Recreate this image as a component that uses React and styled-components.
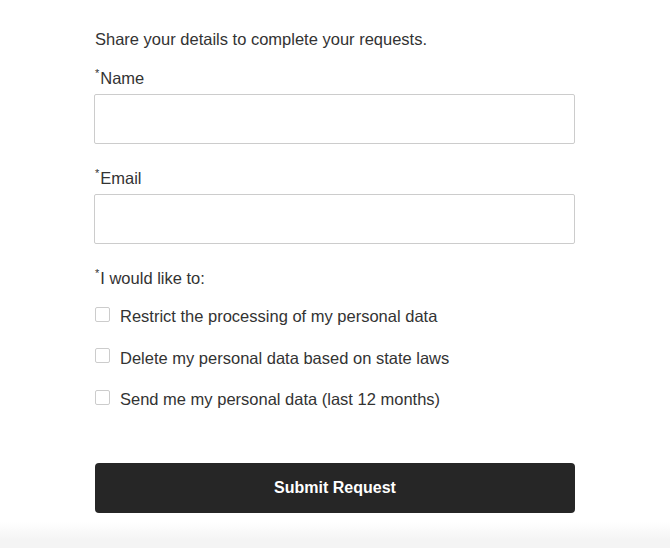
import styled, { createGlobalStyle } from "styled-components";

const GlobalStyle = createGlobalStyle`
  html, body {
    margin: 0;
    padding: 0;
    background: #ffffff;
  }
  body {
    font-family: "Liberation Sans", Arial, sans-serif;
    color: #333333;
  }
`;

const options = [
  "Restrict the processing of my personal data",
  "Delete my personal data based on state laws",
  "Send me my personal data (last 12 months)",
];

const App = () => {
  return (
    <>
      <GlobalStyle />
      <Page>
        <Form onSubmit={(e) => e.preventDefault()}>
          <Intro>Share your details to complete your requests.</Intro>

          <Field>
            <Label htmlFor="name">
              <sup>*</sup>Name
            </Label>
            <Input id="name" type="text" />
          </Field>

          <Field>
            <Label htmlFor="email">
              <sup>*</sup>Email
            </Label>
            <Input id="email" type="email" />
          </Field>

          <Field>
            <Label as="div">
              <sup>*</sup>I would like to:
            </Label>
            <OptionList>
              {options.map((option) => (
                <OptionRow key={option}>
                  <Checkbox type="checkbox" />
                  <span>{option}</span>
                </OptionRow>
              ))}
            </OptionList>
          </Field>

          <SubmitButton type="submit">Submit Request</SubmitButton>
        </Form>
        <FooterShade />
      </Page>
    </>
  );
};

export default App;

const Page = styled.div`
  display: flex;
  flex-direction: column;
  width: 100%;
  padding-top: 27px;
`;

const Form = styled.form`
  display: flex;
  flex-direction: column;
  width: 481px;
  margin-left: 94px;
`;

const Intro = styled.p`
  margin: 0 0 15px 1px;
  font-size: 16.5px;
  line-height: 24px;
  color: #333333;
`;

const Field = styled.div`
  display: flex;
  flex-direction: column;
  margin-bottom: 22px;

  &:last-of-type {
    margin-bottom: 0;
  }
`;

const Label = styled.label`
  font-size: 16.5px;
  line-height: 24px;
  color: #333333;
  margin: 0 0 4px 1px;

  sup {
    font-size: 11px;
    line-height: 0;
    margin-right: 1px;
    position: relative;
    top: -1px;
  }
`;

const Input = styled.input`
  box-sizing: border-box;
  height: 50px;
  width: 100%;
  margin: 0;
  border: 1px solid #cccccc;
  border-radius: 2px;
  padding: 0 12px;
  font-size: 16px;
  font-family: inherit;
  background: #ffffff;
  outline: none;
`;

const OptionList = styled.div`
  display: flex;
  flex-direction: column;
  gap: 17.5px;
  margin-top: 10px;
`;

const OptionRow = styled.label`
  display: flex;
  align-items: center;
  gap: 10px;
  font-size: 16.5px;
  line-height: 24px;
  color: #333333;
  cursor: pointer;
`;

const Checkbox = styled.input`
  appearance: none;
  box-sizing: border-box;
  width: 15px;
  height: 15px;
  margin: 0 0 4px 1px;
  border: 1px solid #cccccc;
  border-radius: 2px;
  background: #ffffff;
  flex-shrink: 0;
`;

const SubmitButton = styled.button`
  margin: 52px 0 0 1px;
  height: 50px;
  width: 480px;
  border: none;
  border-radius: 4px;
  background: #262626;
  color: #ffffff;
  font-family: inherit;
  font-size: 16px;
  font-weight: 700;
  cursor: pointer;
`;

const FooterShade = styled.div`
  margin-top: 9px;
  width: 100%;
  height: 26px;
  background: linear-gradient(to bottom, #ffffff, #f4f4f4 70%, #f4f4f4);
`;
